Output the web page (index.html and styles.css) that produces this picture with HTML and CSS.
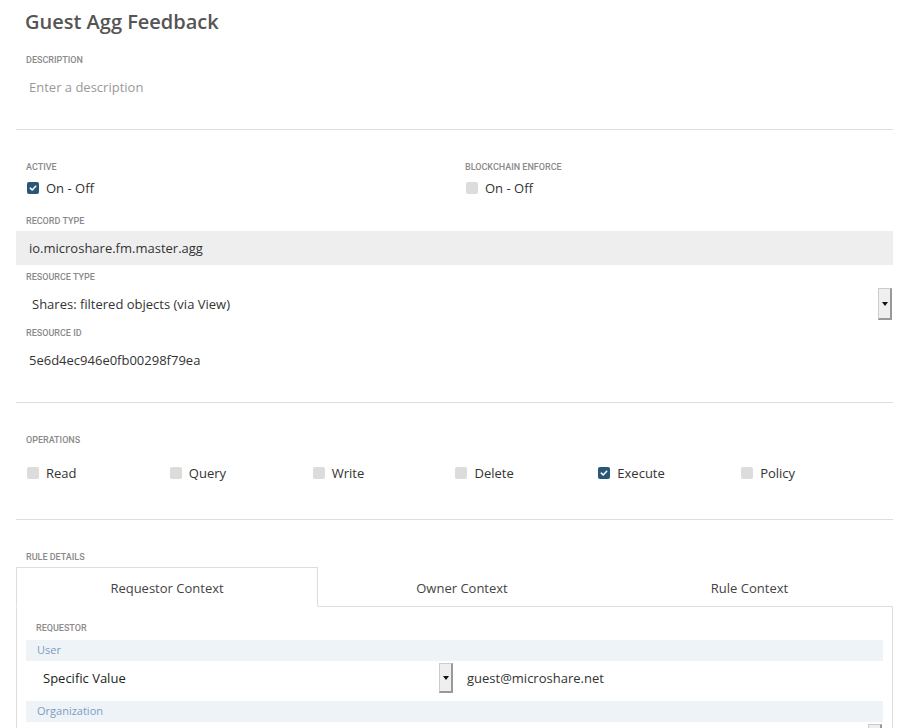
FILE: index.html
```html
<!DOCTYPE html>
<html>
<head>
<meta charset="utf-8">
<link rel="stylesheet" href="styles.css">
</head>
<body>
<div class="page">
  <h1 class="title">Guest Agg Feedback</h1>
  <div class="inner">
    <div class="label lbl-desc">Description</div>
    <div class="placeholder">Enter a description</div>
  </div>
  <hr class="rule rule-1">

  <div class="inner">
    <div class="two-col">
      <div>
        <div class="label lbl-active">Active</div>
        <label class="check-row"><span class="cb checked"><svg viewBox="0 0 12 12" width="12" height="12"><path d="M3.3 6.2 L5.2 8 L8.7 4.3" fill="none" stroke="#fff" stroke-width="1.6" stroke-linecap="round" stroke-linejoin="round"/></svg></span><span>On - Off</span></label>
      </div>
      <div>
        <div class="label lbl-active">Blockchain Enforce</div>
        <label class="check-row"><span class="cb"></span><span>On - Off</span></label>
      </div>
    </div>
    <div class="label lbl-record">Record Type</div>
  </div>
  <div class="readonly">io.microshare.fm.master.agg</div>
  <div class="inner">
    <div class="label lbl-small">Resource Type</div>
  </div>
  <div class="select-row">
    <span class="select-text">Shares: filtered objects (via View)</span>
    <span class="dd-btn tall"><span class="tri"></span></span>
  </div>
  <div class="inner">
    <div class="label lbl-id">Resource ID</div>
    <div class="value">5e6d4ec946e0fb00298f79ea</div>
  </div>
  <hr class="rule rule-2">

  <div class="inner">
    <div class="label lbl-ops">Operations</div>
    <div class="ops">
      <label class="check-row"><span class="cb"></span><span>Read</span></label>
      <label class="check-row"><span class="cb"></span><span>Query</span></label>
      <label class="check-row"><span class="cb"></span><span>Write</span></label>
      <label class="check-row"><span class="cb"></span><span>Delete</span></label>
      <label class="check-row"><span class="cb checked"><svg viewBox="0 0 12 12" width="12" height="12"><path d="M3.3 6.2 L5.2 8 L8.7 4.3" fill="none" stroke="#fff" stroke-width="1.6" stroke-linecap="round" stroke-linejoin="round"/></svg></span><span>Execute</span></label>
      <label class="check-row"><span class="cb"></span><span>Policy</span></label>
    </div>
  </div>
  <hr class="rule rule-3">

  <div class="inner">
    <div class="label lbl-rule">Rule Details</div>
  </div>
  <div class="tabs">
    <div class="tab active">Requestor Context</div>
    <div class="tab t2">Owner Context</div>
    <div class="tab t3">Rule Context</div>
  </div>
  <div class="panel">
    <div class="label lbl-req">Requestor</div>
    <div class="bar">User</div>
    <div class="pair">
      <div class="pair-select">
        <span>Specific Value</span>
        <span class="dd-btn"><span class="tri"></span></span>
      </div>
      <div class="pair-value">guest@microshare.net</div>
    </div>
    <div class="bar">Organization</div>
    <div class="pair">
      <div class="pair-select wide">
        <span>Specific Value</span>
        <span class="dd-btn"><span class="tri"></span></span>
      </div>
    </div>
  </div>
</div>
</body>
</html>
```

FILE: styles.css
```css
* { box-sizing: border-box; }
html, body { margin: 0; padding: 0; background: #fff; }
body {
  font-family: "Open Sans", "Liberation Sans", sans-serif;
  font-size: 13px;
  color: #333;
  overflow: hidden;
  height: 728px;
}
.page {
  padding: 0 10px 0 16px;
}
.title {
  margin: 0;
  padding-left: 9px;
  height: 44px;
  line-height: 44px;
  font-size: 20px;
  font-weight: 600;
  color: #555;
}
.inner {
  padding: 0 10px;
}
.label {
  font-family: Roboto, "Liberation Sans", sans-serif;
  font-size: 9px;
  font-weight: 500;
  text-transform: uppercase;
  color: #8a8a8a;
  line-height: 12px;
  height: 12px;
  padding-top: 1px;
}
.lbl-desc { margin-top: 9px; }
.placeholder {
  margin-top: 12px;
  line-height: 20px;
  height: 20px;
  color: #999;
  padding-left: 3px;
}
.rule {
  border: 0;
  border-top: 1px solid #ddd;
  margin: 0;
  height: 1px;
}
.rule-1 { margin-top: 32px; }
.lbl-active { margin-top: 30px; }
.two-col {
  display: grid;
  grid-template-columns: 439px 1fr;
}
.check-row {
  display: flex;
  align-items: center;
  gap: 7px;
  height: 20px;
  margin-top: 6px;
  padding-left: 1px;
  color: #333;
}
.cb {
  width: 12px;
  height: 12px;
  border-radius: 2px;
  background: #dcdcdc;
  display: inline-block;
  flex: none;
}
.cb.checked { background: #2b5776; }
.cb svg { display: block; }
.lbl-record { margin-top: 16px; }
.readonly {
  margin-top: 5px;
  height: 34px;
  line-height: 34px;
  background: #eee;
  padding-left: 13px;
  color: #333;
}
.lbl-small { margin-top: 5px; }
.select-row {
  margin-top: 6px;
  height: 32px;
  display: flex;
  align-items: center;
  justify-content: space-between;
  padding-left: 16px;
  padding-right: 1px;
}
.dd-btn {
  width: 14px;
  height: 30px;
  background: #efefef;
  border: 1px solid #ccc;
  border-right: 2px solid #999;
  border-bottom: 2px solid #999;
  display: flex;
  align-items: center;
  justify-content: center;
  flex: none;
}
.dd-btn.tall { height: 32px; }
.tri {
  width: 0; height: 0;
  border-left: 3px solid transparent;
  border-right: 3px solid transparent;
  border-top: 4px solid #111;
}
.lbl-id { margin-top: 6px; }
.value {
  margin-top: 12px;
  line-height: 20px;
  height: 20px;
  padding-left: 3px;
}
.rule-2 { margin-top: 32px; }
.lbl-ops { margin-top: 30px; }
.ops {
  display: grid;
  grid-template-columns: repeat(6, 1fr);
  margin-top: 18px;
}
.ops .check-row { margin-top: 0; }
.rule-3 { margin-top: 36px; }
.lbl-rule { margin-top: 30px; }
.tabs {
  margin-top: 5px;
  display: flex;
  height: 40px;
}
.tab {
  display: flex;
  align-items: center;
  justify-content: center;
  border-bottom: 1px solid #ddd;
  color: #444;
  padding-top: 3px;
}
.tab.active {
  width: 302px;
  border: 1px solid #ddd;
  border-bottom: 1px solid transparent;
  padding-top: 1px;
}
.tab.t2 { width: 288px; }
.tab.t3 { flex: 1; }
.panel {
  border-left: 1px solid #ddd;
  border-right: 1px solid #ddd;
  padding: 14px 9px 0 9px;
  height: 200px;
}
.lbl-req { padding-left: 10px; }
.bar {
  margin-top: 7px;
  height: 21px;
  line-height: 20px;
  background: #eef3f7;
  color: #7d9dbd;
  font-size: 11px;
  padding-left: 11px;
}
.pair + .bar { margin-top: 1px; }
.pair {
  display: flex;
  height: 38px;
  margin-top: 1px;
  align-items: flex-start;
  padding-top: 1px;
}
.pair-select {
  width: 428px;
  height: 30px;
  display: flex;
  align-items: center;
  justify-content: space-between;
  padding-left: 17px;
  padding-right: 1px;
  color: #222;
}
.pair-select.wide { width: 857px; }
.pair-select.wide span:first-child { visibility: hidden; }
.pair-value {
  padding-left: 13px;
  line-height: 30px;
  color: #333;
}
```
